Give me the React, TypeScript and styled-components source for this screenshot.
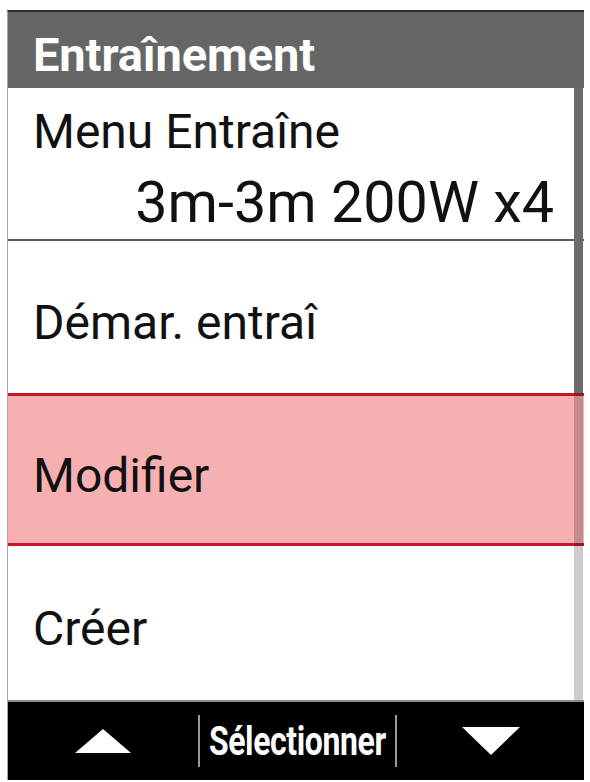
import styled, { createGlobalStyle } from "styled-components";

const GlobalStyle = createGlobalStyle`
  html, body {
    margin: 0;
    padding: 0;
    background: #fff;
  }
  body {
    font-family: Roboto, "Liberation Sans", sans-serif;
  }
`;

const Page = styled.div`
  width: 590px;
  height: 782px;
  padding: 10px 0 0 7px;
  box-sizing: border-box;
`;

const Screen = styled.div`
  position: relative;
  width: 576px;
  border-left: 1px solid #a8a8a8;
  border-top: 2px solid #2c2c2c;
  display: flex;
  flex-direction: column;
`;

const Header = styled.div`
  height: 76px;
  box-sizing: border-box;
  background: #666666;
  color: #fff;
  display: flex;
  align-items: center;
  padding: 8px 0 0 25px;
  font-size: 47px;
  font-weight: 700;
  letter-spacing: -0.1px;
`;

const Row = styled.div<{ $h: number; $selected?: boolean }>`
  height: ${(p) => p.$h}px;
  box-sizing: border-box;
  background: ${(p) => (p.$selected ? "#f6b0b2" : "#fff")};
  display: flex;
  flex-direction: column;
  justify-content: center;
  padding: 12px 30px 0 25px;
  color: #111;
  font-size: 48px;
`;

const Label = styled.div`
  line-height: 1;
`;

const Value = styled.div`
  align-self: flex-end;
  font-size: 57.5px;
  line-height: 1;
  margin-top: 18px;
`;

const Divider = styled.div<{ $red?: boolean }>`
  height: ${(p) => (p.$red ? 3 : 2)}px;
  background: ${(p) => (p.$red ? "#c41a26" : "#5c5c5c")};
`;

const ScrollTrack = styled.div`
  position: absolute;
  top: 76px;
  right: 1px;
  width: 9px;
  height: 612px;
  background: rgba(0, 0, 0, 0.2);
`;

const ScrollThumb = styled.div`
  height: 305px;
  background: #6c6c6c;
`;

const BottomBar = styled.div`
  height: 78px;
  background: #000;
  border-top: 2px solid #8a8a8a;
  display: flex;
  align-items: center;
  color: #fff;
`;

const Cell = styled.div<{ $w?: number }>`
  ${(p) => (p.$w ? `width: ${p.$w}px;` : "flex: 1;")}
  display: flex;
  justify-content: center;
  align-items: center;
  height: 100%;
`;

const Sep = styled.div`
  width: 2px;
  height: 52px;
  background: #9a9a9a;
`;

const SelectText = styled.span`
  display: inline-block;
  font-size: 41px;
  font-weight: 700;
  transform: scaleX(0.78);
  letter-spacing: -0.5px;
  white-space: nowrap;
`;

const Arrow = ({ up }: { up?: boolean }) =>
  up ? (
    <svg width="56" height="24" viewBox="0 0 56 24">
      <polygon points="28,0 56,24 0,24" fill="#fff" />
    </svg>
  ) : (
    <svg width="58" height="28" viewBox="0 0 58 28">
      <polygon points="0,0 58,0 29,28" fill="#fff" />
    </svg>
  );

export default function App() {
  return (
    <>
      <GlobalStyle />
      <Page>
        <Screen>
          <Header>Entraînement</Header>
          <Row $h={151}>
            <Label>Menu Entraîne</Label>
            <Value>3m-3m 200W x4</Value>
          </Row>
          <Divider />
          <Row $h={152}>
            <Label>Démar. entraî</Label>
          </Row>
          <Divider $red />
          <Row $h={147} $selected>
            <Label>Modifier</Label>
          </Row>
          <Divider $red />
          <Row $h={154}>
            <Label>Créer</Label>
          </Row>
          <BottomBar>
            <Cell $w={190}>
              <Arrow up />
            </Cell>
            <Sep />
            <Cell $w={195}>
              <SelectText>Sélectionner</SelectText>
            </Cell>
            <Sep />
            <Cell>
              <Arrow />
            </Cell>
          </BottomBar>
          <ScrollTrack>
            <ScrollThumb />
          </ScrollTrack>
        </Screen>
      </Page>
    </>
  );
}
